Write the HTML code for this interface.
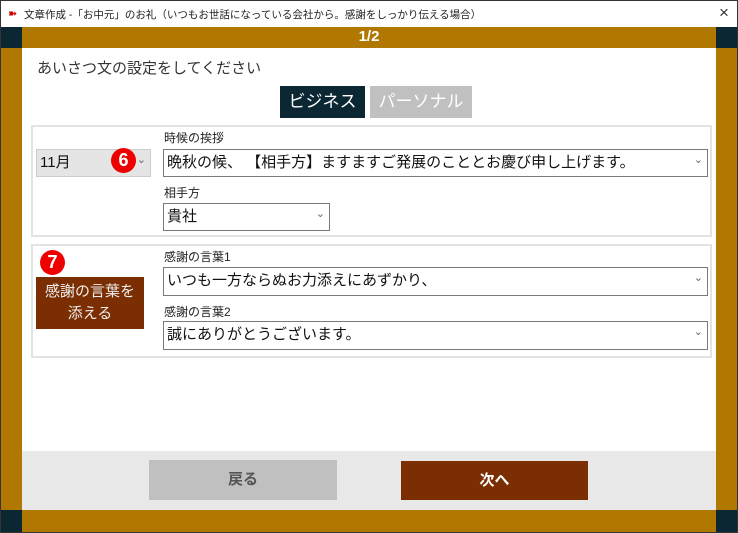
<!DOCTYPE html><html><head><meta charset="utf-8"><style>
*{margin:0;padding:0;box-sizing:border-box}
body{width:738px;height:533px;position:relative;font-family:"Liberation Sans","Noto Sans CJK JP",sans-serif;background:#fff;overflow:hidden}
.a{position:absolute}
.sel{position:absolute;border:1px solid #7a7a7a;background:#fff;font-size:15px;padding-left:3px;line-height:26px;color:#111}
.sel::after{content:"⌄";position:absolute;right:4px;top:-3px;font-size:11px;color:#666}
.lbl{position:absolute;font-size:12px;color:#222}
.badge{position:absolute;width:26px;height:26px;border-radius:50%;background:#e00;color:#fff;font-weight:bold;font-size:18px;text-align:center;line-height:26px}
.box{position:absolute;border:2px solid #e3e3e3}
</style></head><body>
<div class="a" style="left:0;top:0;width:738px;height:533px;border:1px solid #333"></div>
<div class="a" style="left:8px;top:7px;font-size:11px;color:#c00">➽</div>
<div class="a" style="left:24px;top:7px;font-size:10.5px;color:#222">文章作成 -「お中元」のお礼（いつもお世話になっている会社から。感謝をしっかり伝える場合）</div>
<div class="a" style="left:719px;top:3px;font-size:17px;color:#333;font-weight:300">×</div>
<div class="a" style="left:1px;top:27px;width:736px;height:21px;background:#b07800"></div>
<div class="a" style="left:1px;top:27px;width:21px;height:21px;background:#0b2733"></div>
<div class="a" style="left:716px;top:27px;width:21px;height:21px;background:#0b2733"></div>
<div class="a" style="left:0;top:28px;width:738px;text-align:center;color:#fff;font-weight:bold;font-size:15px">1/2</div>
<div class="a" style="left:1px;top:48px;width:21px;height:462px;background:#b07800"></div>
<div class="a" style="left:716px;top:48px;width:21px;height:462px;background:#b07800"></div>
<div class="a" style="left:1px;top:510px;width:736px;height:22px;background:#b07800"></div>
<div class="a" style="left:1px;top:510px;width:21px;height:22px;background:#0b2733"></div>
<div class="a" style="left:716px;top:510px;width:21px;height:22px;background:#0b2733"></div>
<div class="a" style="left:37px;top:57px;font-size:15px;color:#333">あいさつ文の設定をしてください</div>
<div class="a" style="left:280px;top:86px;width:85px;height:32px;background:#0b2733;color:#fff;font-size:17px;text-align:center;line-height:32px">ビジネス</div>
<div class="a" style="left:370px;top:86px;width:102px;height:32px;background:#c0c0c0;color:#fff;font-size:17px;text-align:center;line-height:32px">パーソナル</div>
<div class="box" style="left:31px;top:125px;width:681px;height:112px"></div>
<div class="sel" style="left:36px;top:149px;width:115px;height:28px;background:#e5e5e5;border-color:#ccc">11月</div>
<div class="badge" style="left:111px;top:148px;width:25px;height:25px;line-height:25px">6</div>
<div class="lbl" style="left:164px;top:129px">時候の挨拶</div>
<div class="sel" style="left:163px;top:149px;width:545px;height:28px">晩秋の候、 【相手方】ますますご発展のこととお慶び申し上げます。</div>
<div class="lbl" style="left:164px;top:184px">相手方</div>
<div class="sel" style="left:163px;top:203px;width:167px;height:28px">貴社</div>
<div class="box" style="left:31px;top:244px;width:681px;height:114px"></div>
<div class="badge" style="left:40px;top:250px;width:25px;height:25px;line-height:25px">7</div>
<div class="a" style="left:36px;top:277px;width:108px;height:52px;background:#7a2e02;color:#eee;font-size:15px;text-align:center;line-height:22px;padding-top:4px">感謝の言葉を<br>添える</div>
<div class="lbl" style="left:164px;top:248px">感謝の言葉1</div>
<div class="sel" style="left:163px;top:267px;width:545px;height:29px">いつも一方ならぬお力添えにあずかり、</div>
<div class="lbl" style="left:164px;top:303px">感謝の言葉2</div>
<div class="sel" style="left:163px;top:321px;width:545px;height:29px">誠にありがとうございます。</div>
<div class="a" style="left:22px;top:451px;width:694px;height:59px;background:#e8e8e8"></div>
<div class="a" style="left:149px;top:460px;width:188px;height:40px;background:#c0c0c0;color:#555;font-weight:bold;font-size:15px;text-align:center;line-height:40px">戻る</div>
<div class="a" style="left:401px;top:461px;width:187px;height:39px;background:#7a2e02;color:#fff;font-weight:bold;font-size:15px;text-align:center;line-height:39px">次へ</div>
</body></html>
